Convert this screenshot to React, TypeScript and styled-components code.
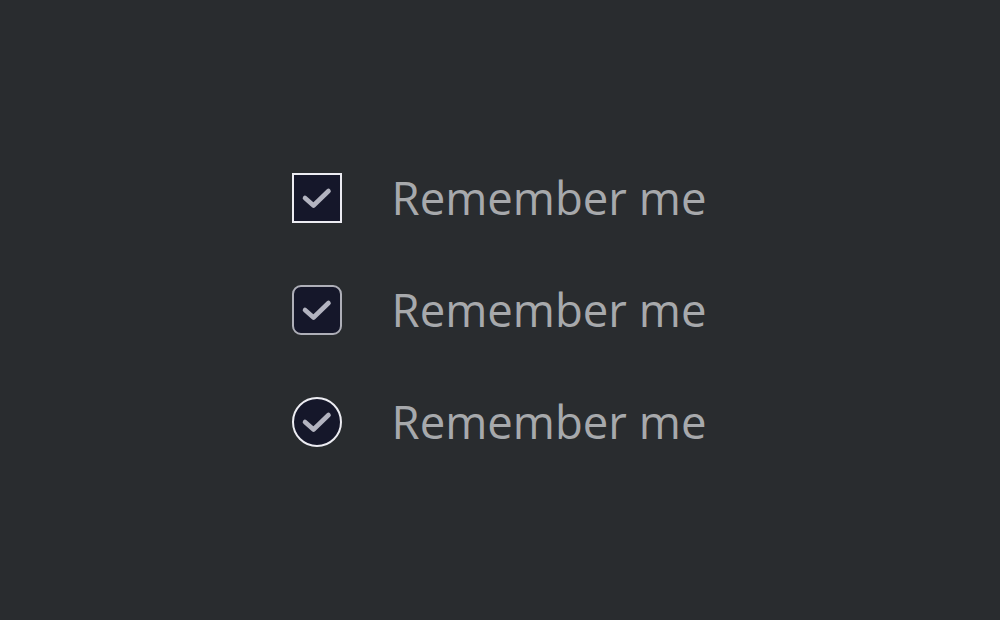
import styled, { createGlobalStyle, css } from "styled-components";

const GlobalStyle = createGlobalStyle`
    html, body {
        margin: 0;
        padding: 0;
        background: #292c2f;
    }
`;

const Page = styled.div`
    width: 100vw;
    height: 100vh;
    display: flex;
    justify-content: center;
    align-items: center;
`;

const List = styled.div`
    display: flex;
    flex-direction: column;
    gap: 62px;
    margin-right: 2px;
`;

const Row = styled.label`
    display: flex;
    align-items: center;
    gap: 50px;
    cursor: pointer;
`;

type Shape = "square" | "rounded" | "circle";

const Box = styled.span<{ $shape: Shape }>`
    box-sizing: border-box;
    width: 50px;
    height: 50px;
    display: flex;
    justify-content: center;
    align-items: center;
    background: #15172a;
    border: 2px solid #ececf2;
    flex-shrink: 0;

    svg {
        flex-shrink: 0;
    }

    ${({ $shape }) =>
        $shape === "rounded" &&
        css`
            border-radius: 9px;
            border: 2px solid #aeafb8;
        `}

    ${({ $shape }) =>
        $shape === "circle" &&
        css`
            border-radius: 50%;
        `}
`;

const Label = styled.span`
    font-family: "Open Sans", "Liberation Sans", sans-serif;
    font-size: 45.5px;
    font-weight: 400;
    color: #a7a9ac;
    line-height: 1;
`;

// tick drawn in the box's outer coordinates (0..50), inner area is 2..48
function Check() {
    return (
        <svg width="46" height="46" viewBox="2 2 46 46" fill="none">
            <path
                d="M13 25 L21.5 32.5 L36.5 18"
                stroke="#b3b4c0"
                strokeWidth="4.6"
                strokeLinecap="round"
                strokeLinejoin="round"
            />
        </svg>
    );
}

const shapes: Shape[] = ["square", "rounded", "circle"];

function App() {
    return (
        <>
            <GlobalStyle />
            <Page>
                <List>
                    {shapes.map((s) => (
                        <Row key={s}>
                            <Box $shape={s}>
                                <Check />
                            </Box>
                            <Label>Remember me</Label>
                        </Row>
                    ))}
                </List>
            </Page>
        </>
    );
}

export default App;
